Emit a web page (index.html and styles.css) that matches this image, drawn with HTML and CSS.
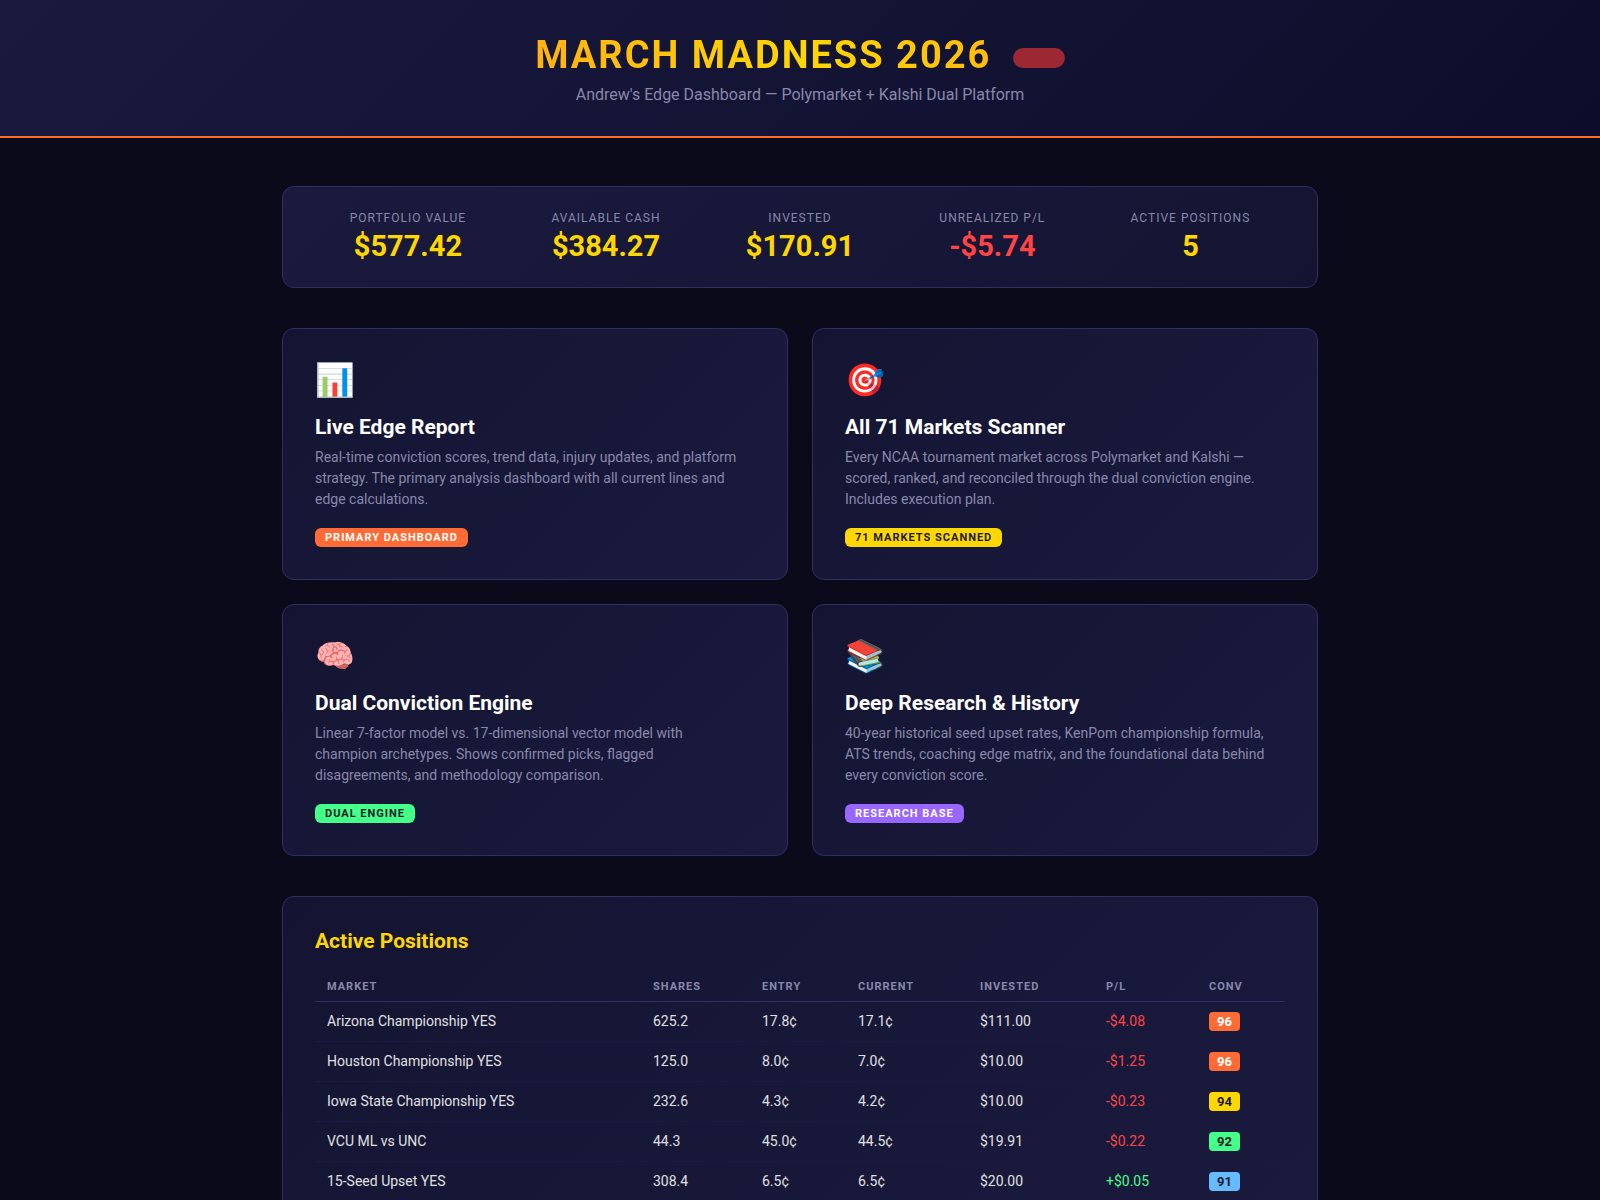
FILE: index.html
```
<!DOCTYPE html>
<html lang="en">
<head>
<meta charset="utf-8">
<title>March Madness 2026</title>
<link rel="stylesheet" href="styles.css">
</head>
<body>
<header class="header">
  <h1>MARCH MADNESS 2026 <span class="live"></span></h1>
  <p>Andrew's Edge Dashboard — Polymarket + Kalshi Dual Platform</p>
</header>
<main class="container">
  <section class="stats">
    <div class="stat"><div class="label">Portfolio Value</div><div class="value">$577.42</div></div>
    <div class="stat"><div class="label">Available Cash</div><div class="value">$384.27</div></div>
    <div class="stat"><div class="label">Invested</div><div class="value">$170.91</div></div>
    <div class="stat"><div class="label">Unrealized P/L</div><div class="value neg">-$5.74</div></div>
    <div class="stat"><div class="label">Active Positions</div><div class="value">5</div></div>
  </section>
  <nav class="grid">
    <a class="card" href="#report"><div class="icon">📊</div><h2>Live Edge Report</h2><p>Real-time conviction scores, trend data, injury updates, and platform strategy. The primary analysis dashboard with all current lines and edge calculations.</p><span class="tag orange">Primary Dashboard</span></a>
    <a class="card" href="#scanner"><div class="icon">🎯</div><h2>All 71 Markets Scanner</h2><p>Every NCAA tournament market across Polymarket and Kalshi — scored, ranked, and reconciled through the dual conviction engine. Includes execution plan.</p><span class="tag gold">71 Markets Scanned</span></a>
    <a class="card" href="#engine"><div class="icon">🧠</div><h2>Dual Conviction Engine</h2><p>Linear 7-factor model vs. 17-dimensional vector model with champion archetypes. Shows confirmed picks, flagged disagreements, and methodology comparison.</p><span class="tag green">Dual Engine</span></a>
    <a class="card" href="#research"><div class="icon">📚</div><h2>Deep Research &amp; History</h2><p>40-year historical seed upset rates, KenPom championship formula, ATS trends, coaching edge matrix, and the foundational data behind every conviction score.</p><span class="tag purple">Research Base</span></a>
  </nav>
  <section class="positions">
    <h2>Active Positions</h2>
    <table>
      <colgroup><col><col class="col-shares"><col class="col-entry"><col class="col-current"><col class="col-invested"><col class="col-pl"><col class="col-conv"></colgroup>
      <thead><tr><th>Market</th><th>Shares</th><th>Entry</th><th>Current</th><th>Invested</th><th>P/L</th><th>Conv</th></tr></thead>
      <tbody>
        <tr><td>Arizona Championship YES</td><td>625.2</td><td>17.8¢</td><td>17.1¢</td><td>$111.00</td><td class="neg">-$4.08</td><td><span class="conv orange">96</span></td></tr>
        <tr><td>Houston Championship YES</td><td>125.0</td><td>8.0¢</td><td>7.0¢</td><td>$10.00</td><td class="neg">-$1.25</td><td><span class="conv orange">96</span></td></tr>
        <tr><td>Iowa State Championship YES</td><td>232.6</td><td>4.3¢</td><td>4.2¢</td><td>$10.00</td><td class="neg">-$0.23</td><td><span class="conv gold">94</span></td></tr>
        <tr><td>VCU ML vs UNC</td><td>44.3</td><td>45.0¢</td><td>44.5¢</td><td>$19.91</td><td class="neg">-$0.22</td><td><span class="conv green">92</span></td></tr>
        <tr><td>15-Seed Upset YES</td><td>308.4</td><td>6.5¢</td><td>6.5¢</td><td>$20.00</td><td class="pos">+$0.05</td><td><span class="conv blue">91</span></td></tr>
      </tbody>
    </table>
  </section>
</main>
</body>
</html>
```
FILE: styles.css
```
* { margin: 0; padding: 0; box-sizing: border-box; }

body {
  background: #0a0a1a;
  color: #e0e0e0;
  font-family: Roboto, sans-serif;
  line-height: 1.5;
}

.header {
  background: linear-gradient(135deg, #1a1a3e 0%, #0d0d2b 100%);
  border-bottom: 2px solid #ff6b35;
  padding: 32px;
  text-align: center;
}
.header h1 {
  background: linear-gradient(90deg, #ff6b35, #ffd700, #ff6b35);
  -webkit-background-clip: text;
  background-clip: text;
  color: transparent;
  font-size: 38px;
  line-height: 47px;
  letter-spacing: 2px;
  margin-bottom: 6px;
}
.header p { color: #8888aa; font-size: 16px; line-height: 19px; }
.live {
  display: inline-block;
  width: 52px;
  height: 20px;
  margin-left: 10px;
  border-radius: 12px;
  background: #9c2833;
  vertical-align: middle;
}

.container { max-width: 1100px; margin: 0 auto; padding: 48px 32px; }

.stats, .card, .positions {
  background: linear-gradient(135deg, #141432, #1a1a3e);
  border: 1px solid #2f2f66;
  border-radius: 12px;
}
.stats {
  display: flex;
  justify-content: space-around;
  padding: 24px;
  margin-bottom: 40px;
  background: linear-gradient(135deg, #1a1a3e, #141432);
}
.stat { text-align: center; }
.label { color: #8888aa; font-size: 12px; line-height: 14px; letter-spacing: 1px; margin-bottom: 4px; text-transform: uppercase; }
.value { color: #ffd700; font-size: 29px; font-weight: 700; line-height: 34px; }
.value.neg, .neg { color: #ff4444; }
.pos { color: #44ff88; }

.grid {
  display: grid;
  grid-template-columns: 1fr 1fr;
  gap: 24px;
  margin-bottom: 40px;
}
.card {
  display: flex;
  flex-direction: column;
  align-items: flex-start;
  padding: 32px;
  color: inherit;
  text-decoration: none;
}
.icon { font-size: 32px; line-height: 38px; margin-bottom: 16px; }
.card h2 { color: #fff; font-size: 21px; line-height: 24px; margin-bottom: 8px; }
.card p { color: #8888aa; font-size: 14px; line-height: 21px; padding-right: 12px; margin-bottom: 18px; }
.orange { background: #ff6b35; color: #fff; }
.gold { background: #ffd700; color: #1a1a2e; }
.green { background: #44ff88; color: #1a1a2e; }
.purple { background: #9966ff; color: #fff; }
.blue { background: #66bbff; color: #1a1a2e; }
.tag {
  padding: 3px 10px;
  border-radius: 6px;
  font-size: 11px;
  font-weight: 700;
  line-height: 13px;
  letter-spacing: 1px;
  text-transform: uppercase;
}

.positions { padding: 32px; }
.positions h2 { color: #ffd700; font-size: 21px; line-height: 24px; margin-bottom: 20px; }
table { width: 100%; border-collapse: collapse; table-layout: fixed; }
.col-shares { width: 109px; }
.col-entry { width: 96px; }
.col-current { width: 122px; }
.col-invested { width: 126px; }
.col-pl { width: 103px; }
.col-conv { width: 88px; }
th {
  padding: 8px 12px;
  border-bottom: 1px solid #2f2f66;
  color: #8888aa;
  font-size: 11px;
  line-height: 12px;
  letter-spacing: 1px;
  text-align: left;
  text-transform: uppercase;
}
td { padding: 9px 12px; border-bottom: 1px solid #1a1a3e; font-size: 14px; line-height: 21px; }
.conv { display: inline-block; padding: 2px 8px; border-radius: 4px; font-size: 13px; font-weight: 700; line-height: 15px; }
```
